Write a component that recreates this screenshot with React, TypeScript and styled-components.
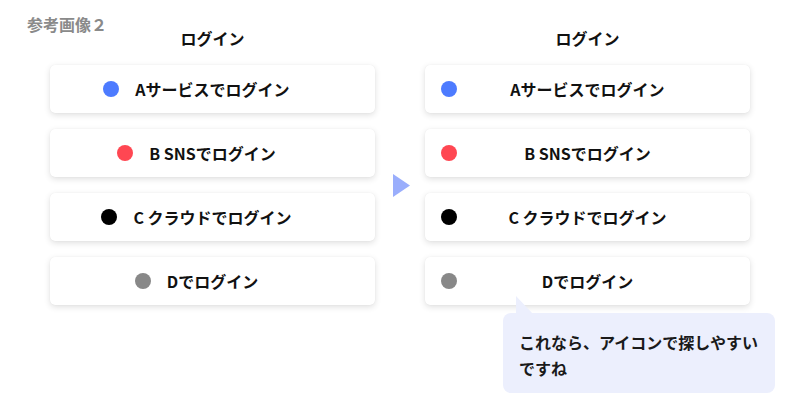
import React from "react";
import styled, { createGlobalStyle } from "styled-components";

const GlobalStyle = createGlobalStyle`
  html, body { margin: 0; padding: 0; background: #ffffff; }
  body {
    font-family: "Noto Sans CJK JP", "Noto Sans", sans-serif;
    color: #111111;
  }
`;

const Page = styled.div`
  width: 800px;
  height: 419px;
  box-sizing: border-box;
  padding-top: 16px;
  overflow: hidden;
  background: #ffffff;
`;

const Caption = styled.div`
  margin: 0 0 -4px 27px;
  font-size: 16px;
  line-height: 16px;
  font-weight: 700;
  color: #8a8a8a;
`;

const Board = styled.div`
  display: grid;
  grid-template-columns: 325px 50px 325px;
  grid-template-rows: auto auto auto;
  padding-left: 50px;
`;

const Heading = styled.div<{ $col: number }>`
  grid-column: ${(p) => p.$col};
  grid-row: 1;
  text-align: center;
  font-size: 16px;
  line-height: 20px;
  font-weight: 700;
  margin-bottom: 17px;
`;

const List = styled.div<{ $col: number }>`
  grid-column: ${(p) => p.$col};
  grid-row: 2;
  display: flex;
  flex-direction: column;
  gap: 16px;
`;

const Card = styled.div`
  height: 48px;
  background: #ffffff;
  border-radius: 5px;
  box-shadow: 0 0 1px rgba(0, 0, 0, 0.08), 0 2px 6px rgba(0, 0, 0, 0.13);
  display: grid;
  grid-template-columns: 1fr auto 1fr;
  align-items: center;
`;

const Dot = styled.span<{ $color: string; $variant: "near" | "edge" }>`
  grid-column: 1;
  width: 16px;
  height: 16px;
  border-radius: 50%;
  background: ${(p) => p.$color};
  justify-self: ${(p) => (p.$variant === "near" ? "end" : "start")};
  margin: ${(p) => (p.$variant === "near" ? "0 16px 0 0" : "0 0 0 16px")};
`;

const Label = styled.span`
  grid-column: 2;
  font-size: 16px;
  line-height: 20px;
  font-weight: 700;
  color: #111111;
  white-space: nowrap;
`;

const ArrowCell = styled.div`
  grid-column: 2;
  grid-row: 2;
  display: flex;
  align-items: center;
  padding-left: 18px;
`;

const Bubble = styled.div`
  grid-column: 3;
  grid-row: 3;
  position: relative;
  justify-self: start;
  width: 272px;
  box-sizing: border-box;
  margin: 8px 0 0 78px;
  padding: 16px 12px 12px 16px;
  background: #eceffd;
  border-radius: 8px;
  font-size: 16px;
  line-height: 26px;
  font-weight: 700;
  color: #1a1a1a;

  &::before {
    content: "";
    position: absolute;
    left: 13px;
    top: -17px;
    width: 17px;
    height: 18px;
    background: #eceffd;
    clip-path: polygon(0 0, 100% 100%, 0 100%);
  }
`;

type Item = { color: string; label: string };

const items: Item[] = [
  { color: "#4d7bff", label: "Aサービスでログイン" },
  { color: "#ff4752", label: "B SNSでログイン" },
  { color: "#000000", label: "C クラウドでログイン" },
  { color: "#888888", label: "Dでログイン" },
];

const LoginList = ({ col, variant }: { col: number; variant: "near" | "edge" }) => (
  <List $col={col}>
    {items.map((it) => (
      <Card key={it.label}>
        <Dot $color={it.color} $variant={variant} />
        <Label>{it.label}</Label>
      </Card>
    ))}
  </List>
);

export default function App() {
  return (
    <>
      <GlobalStyle />
      <Page>
        <Caption>参考画像２</Caption>
        <Board>
          <Heading $col={1}>ログイン</Heading>
          <Heading $col={3}>ログイン</Heading>
          <LoginList col={1} variant="near" />
          <ArrowCell>
            <svg width="17" height="23" viewBox="0 0 17 23" aria-hidden="true">
              <polygon points="0,0 17,11.5 0,23" fill="#9aaefc" />
            </svg>
          </ArrowCell>
          <LoginList col={3} variant="edge" />
          <Bubble>これなら、アイコンで探しやすいですね</Bubble>
        </Board>
      </Page>
    </>
  );
}
